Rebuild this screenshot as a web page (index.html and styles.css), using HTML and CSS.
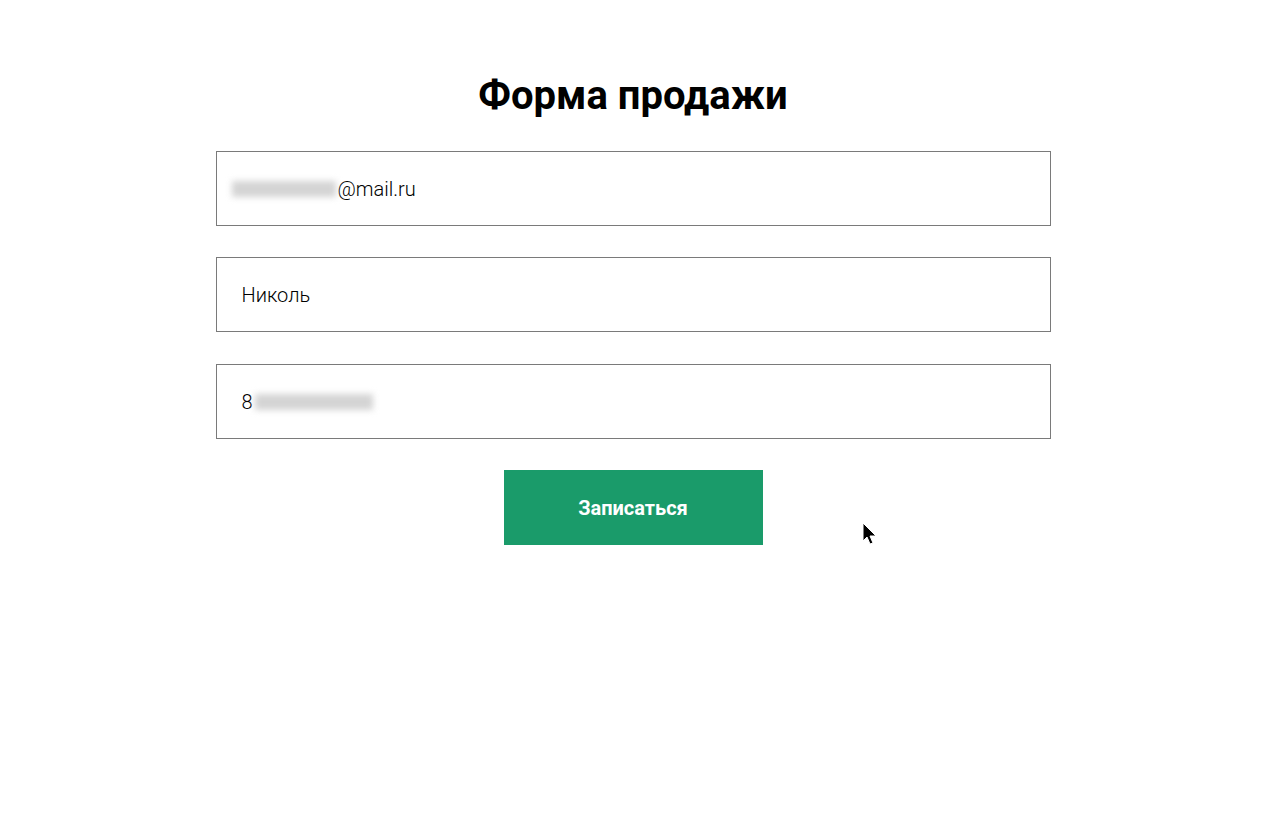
FILE: index.html
```html
<!DOCTYPE html>
<html lang="ru">
<head>
<meta charset="utf-8">
<title>Форма продажи</title>
<link rel="stylesheet" href="styles.css">
</head>
<body>
<main class="page">
  <h1 class="title">Форма продажи</h1>
  <form class="form">
    <div class="field"><span class="blur blur-email"></span><span class="value">@mail.ru</span></div>
    <div class="field"><span class="value">Николь</span></div>
    <div class="field field-phone"><span class="value">8</span><span class="blur blur-phone"></span></div>
    <button type="button" class="submit">Записаться</button>
  </form>
</main>
<svg class="cursor" width="16" height="24" viewBox="0 0 16 24"><path d="M1 1 L1 19 L5 15 L8 22 L11 21 L8 14 L14 14 Z" fill="#000" stroke="#fff" stroke-width="1"/></svg>
</body>
</html>
```
FILE: styles.css
```css
html, body { margin: 0; padding: 0; background: #fff; }
body { font-family: Roboto, "Noto Sans", sans-serif; position: relative; min-height: 821px; }
.page { width: 835px; margin: 0 auto; padding-top: 70px; }
.title { margin: 0 0 29px; text-align: center; font-size: 40px; font-weight: 700; color: #000; line-height: 52px; }
.form { display: flex; flex-direction: column; gap: 31px; align-items: center; }
.field { box-sizing: border-box; width: 835px; height: 75px; border: 1px solid #7a7a7a; display: flex; align-items: center; padding-left: 25px; font-size: 20px; font-weight: 300; color: #000; }
.field-phone { margin-top: 1px; }
.field:first-child .blur-email { margin-left: -10px; }
.blur { display: inline-block; background: #d4d4d4; filter: blur(3px); height: 16px; }
.blur-email { width: 104px; margin-right: 2px; }
.blur-phone { width: 118px; margin-left: 2px; }
.submit { width: 259px; height: 75px; border: none; background: #1a9b6a; color: #fff; font-family: Roboto, sans-serif; font-size: 20px; font-weight: 700; cursor: pointer; }
.cursor { position: absolute; left: 862px; top: 522px; }
```
